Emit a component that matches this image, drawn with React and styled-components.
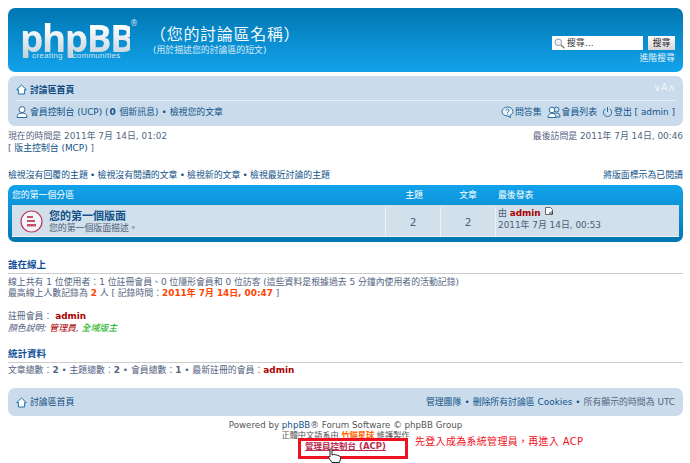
import styled, { createGlobalStyle } from "styled-components";

const cjk = `"DejaVu Sans", "Noto Sans CJK TC", sans-serif`;
const base = "8.9px";

const GlobalStyle = createGlobalStyle`
  html, body {
    margin: 0;
    padding: 0;
    background: #fff;
  }
  body {
    font-family: ${cjk};
    font-size: ${base};
    line-height: 12px;
    color: #536482;
    overflow: hidden;
  }
  a { text-decoration: none; color: #105289; }
`;

const Page = styled.div`
  width: 690px;
  height: 463px;
  box-sizing: border-box;
  padding: 8px 7px 0 8px;
  overflow: hidden;
`;

const Header = styled.header`
  height: 64px;
  border-radius: 7px;
  background: linear-gradient(180deg, #0076b1 0%, #12a3eb 100%);
  display: flex;
  justify-content: space-between;
  color: #fff;
`;

const Brand = styled.div`
  display: flex;
  padding: 10px 0 0 12px;
`;

const Logo = styled.div`
  position: relative;
  width: 120px;
  height: 50px;
`;

const LogoWord = styled.span`
  display: block;
  width: 110px;
  font-family: "Open Sans", "DejaVu Sans", sans-serif;
  font-size: 37px;
  line-height: 40px;
  letter-spacing: -1.5px;
  font-weight: 700;
  background: linear-gradient(180deg, #ffffff 20%, #c4d2dc 95%);
  -webkit-background-clip: text;
  background-clip: text;
  color: transparent;
`;

const LogoReg = styled.span`
  position: absolute;
  left: 110px;
  top: 2px;
  font-size: 8px;
  line-height: 8px;
  color: #d6e6f0;
`;

const LogoTag = styled.span`
  position: absolute;
  left: 12px;
  top: 33px;
  font-family: "Liberation Sans", sans-serif;
  font-size: 8px;
  line-height: 10px;
  letter-spacing: 0.3px;
  word-spacing: 7px;
  color: #d4e4ef;
  white-space: nowrap;
`;

const SiteText = styled.div`
  margin-left: 13px;
  padding-top: 4px;
`;

const SiteTitle = styled.h1`
  margin: 0 0 0 -3px;
  font-family: "Noto Sans CJK TC", sans-serif;
  font-size: 16px;
  line-height: 22px;
  font-weight: 400;
  letter-spacing: 0.7px;
  color: #f2f8fc;
`;

const SiteDesc = styled.p`
  margin: 0;
  font-size: ${base};
  line-height: 12px;
  color: #dcecf6;
`;

const SearchArea = styled.div`
  display: flex;
  flex-direction: column;
  align-items: flex-end;
  padding: 28px 8px 0 0;
`;

const SearchRow = styled.div`
  display: flex;
  gap: 5px;
`;

const SearchInput = styled.div`
  width: 91px;
  height: 14px;
  background: #fff;
  display: flex;
  align-items: center;
  gap: 2px;
  padding-left: 2px;
  box-sizing: border-box;
  color: #333;
  font-size: ${base};
`;

const SearchButton = styled.div`
  width: 27px;
  height: 14px;
  background: linear-gradient(180deg, #fbfbfb, #d6d6d6);
  color: #222;
  font-size: ${base};
  line-height: 14px;
  text-align: center;
`;

const AdvLink = styled.a`
  color: #e6f3fb;
  font-size: ${base};
  margin-top: 2px;
`;

const NavBar = styled.nav`
  margin-top: 4px;
  height: 50px;
  box-sizing: border-box;
  padding: 0 8px;
  border-radius: 7px;
  background: #cadceb;
`;

const NavRow = styled.div`
  display: flex;
  align-items: center;
  justify-content: space-between;
  ${(p) =>
    p.$divided
      ? "height: 21px; padding-top: 3px; border-bottom: 1px solid #e8f0f6;"
      : "height: 22px;"}
`;

const NavGroup = styled.div`
  display: flex;
  align-items: center;
  gap: ${(p) => p.$gap || 0}px;
`;

const Crumb = styled.a`
  display: flex;
  align-items: center;
  gap: 3px;
  color: #0d4a80;
  font-size: ${base};
  font-weight: ${(p) => (p.$bold ? 700 : 400)};
`;

const NavLink = styled.a`
  display: flex;
  align-items: center;
  gap: 1px;
  color: #105289;
  font-size: ${base};
  white-space: pre;
`;

const Bullet = styled.span`
  color: #105289;
  margin: 0 3px;
`;

const FontSizer = styled.span`
  color: #eef4f9;
  font-size: 10px;
  margin-top: -4px;
`;

const TimeRows = styled.div`
  margin-top: 4px;
  height: 24px;
  display: flex;
  justify-content: space-between;
  color: #536482;
`;

const TimeLink = styled.a`
  color: #105289;
`;

const QuickLinks = styled.div`
  margin-top: 15px;
  display: flex;
  justify-content: space-between;
  color: #105289;
  white-space: pre;
  word-spacing: -0.6px;
`;

const ForumBlock = styled.section`
  margin-top: 4px;
  height: 57px;
  box-sizing: border-box;
  padding: 0 4px 5px 4px;
  border-radius: 7px;
  background: linear-gradient(180deg, #12a3eb 0%, #0c8ed2 50%, #0076b1 100%);
`;

const ForumHead = styled.div`
  height: 20px;
  display: flex;
  align-items: center;
  color: #fff;
  font-size: ${base};
`;

const ForumBody = styled.div`
  height: 32px;
  background: #d2e0eb;
  display: flex;
  color: #4c5d77;
  padding-top: 2px;
  box-sizing: border-box;
  border-bottom: 1px solid #eef3f7;
`;

const NameCol = styled.div`
  flex: 1;
  display: flex;
  align-items: center;
  gap: 6px;
  min-width: 0;
  padding-left: ${(p) => (p.$head ? 0 : 8)}px;
`;

const CountCol = styled.div`
  width: 54px;
  text-align: center;
  font-size: ${(p) => (p.$head ? base : "10.5px")};
  display: flex;
  align-items: center;
  justify-content: center;
  ${(p) => !p.$head && "border-left: 1px solid #eef3f7;"}
`;

const LastCol = styled.div`
  width: 184px;
  box-sizing: border-box;
  padding-left: 3px;
  ${(p) =>
    p.$head
      ? "display: flex; align-items: center;"
      : "padding-left: 2px; border-left: 1px solid #eef3f7;"}
`;

const ForumTitle = styled.a`
  display: block;
  color: #105289;
  font-size: 11px;
  line-height: 13px;
  font-weight: 700;
`;

const ForumDesc = styled.div`
  font-size: ${base};
  line-height: 11px;
`;

const Strong = styled.strong`
  color: ${(p) => p.$color || "#aa0000"};
  font-weight: ${(p) => p.$weight || 700};
`;

const Section = styled.section`
  margin-top: ${(p) => p.$top}px;
`;

const SectionTitle = styled.h3`
  margin: 0;
  font-size: 9.5px;
  line-height: 13px;
  font-weight: 700;
  color: #115098;
  border-bottom: 1px solid #cccccc;
  padding-bottom: 2px;
`;

const TextLine = styled.p`
  margin: 0;
  white-space: pre;
  color: #536482;
  line-height: ${(p) => p.$lh || 12}px;
  padding-top: ${(p) => p.$pt || 0}px;
`;

const Legend = styled.p`
  margin: 0;
  font-style: italic;
  font-size: ${base};
  line-height: 12px;
  color: #536482;
`;

const FootBar = styled(NavBar)`
  margin-top: 12px;
  height: 28px;
  display: flex;
  align-items: center;
  justify-content: space-between;
`;

const Credit = styled.div`
  margin-top: 4px;
  text-align: center;
  color: #555;
  font-size: 8.7px;
  line-height: 10px;
`;

const CreditSmall = styled.div`
  font-size: 8.2px;
`;

const Hot = styled.span`
  color: #ff6600;
  font-weight: 700;
`;

const AcpLine = styled.div`
  position: relative;
  height: 12px;
  display: flex;
  justify-content: center;
`;

const AcpLink = styled.a`
  color: #bc2a4d;
  font-weight: 700;
  font-size: 8.5px;
  line-height: 12px;
  text-decoration: underline;
`;

const RedBox = styled.div`
  position: absolute;
  left: 290px;
  top: -2px;
  width: 110px;
  height: 21px;
  box-sizing: border-box;
  border: 3px solid #ee1122;
`;

const Note = styled.span`
  position: absolute;
  left: 407px;
  top: -5px;
  color: #f01020;
  font-size: 10px;
  line-height: 14px;
  letter-spacing: 0.3px;
  white-space: nowrap;
`;

const Cursor = styled.svg`
  position: absolute;
  left: 319px;
  top: 8px;
`;

const PostGlyph = styled.svg`
  margin-left: 2px;
`;

const HomeIcon = () => (
  <svg width="11" height="11" viewBox="0 0 11 11" fill="none">
    <path d="M.7 5.600 5.500 1l4.800 4.600H8.600v4.400H2.400V5.600z" fill="#fff" stroke="#1a6fa8" />
  </svg>
);

const UserIcon = () => (
  <svg width="13" height="12" viewBox="0 0 13 12" fill="none">
    <circle cx="6" cy="3.600" r="3" fill="#fff" stroke="#2d6d9e" />
    <path d="M1 11.500c0-3 2-4.500 5-4.500s5 1.500 5 4.500z" fill="#fff" stroke="#2d6d9e" />
  </svg>
);

const FaqIcon = () => (
  <svg width="13" height="12" viewBox="0 0 13 12" fill="none">
    <path d="M6.500 1C3.400 1 1 2.900 1 5.500S3.400 10 6.500 10l3 1.500-.6-2C10.800 8.700 12 7.200 12 5.500 12 2.900 9.600 1 6.500 1z" fill="#e8f1f7" stroke="#2d6d9e" />
    <path d="M5 4.500c0-2 3-2 3 0 0 1.200-1.500 1.100-1.500 2.300M6.500 7.800v.8" stroke="#2d6d9e" />
  </svg>
);

const MembersIcon = () => (
  <svg width="14" height="12" viewBox="0 0 14 12" fill="none">
    <circle cx="9.500" cy="3.500" r="2.500" fill="#cfe0ec" stroke="#2d6d9e" />
    <path d="M6 11c0-2.500 1.200-4 3.500-4S13 8.500 13 11z" fill="#cfe0ec" stroke="#2d6d9e" />
    <circle cx="5" cy="4" r="2.800" fill="#fff" stroke="#2d6d9e" />
    <path d="M1 11.500c0-2.700 1.500-4.200 4-4.200s4 1.500 4 4.200z" fill="#fff" stroke="#2d6d9e" />
  </svg>
);

const PowerIcon = () => (
  <svg width="11" height="12" viewBox="0 0 11 12" fill="none">
    <path d="M3.300 2.700a4.200 4.200 0 1 0 4.400 0" stroke="#2d6d9e" />
    <path d="M5.500 1v5" stroke="#2d6d9e" />
  </svg>
);

const SearchIcon = () => (
  <svg width="11" height="11" viewBox="0 0 11 11" fill="none">
    <circle cx="4.300" cy="4.300" r="3.300" fill="#eef3f7" stroke="#8a9aa8" />
    <path d="M7 7l3.300 3.300" stroke="#8a7a5a" strokeWidth="1.500" />
  </svg>
);

const ForumIcon = () => (
  <svg width="23" height="23" viewBox="0 0 23 23" fill="none">
    <circle cx="11.500" cy="11.500" r="10.500" fill="#f3f6f9" stroke="#c03a5e" strokeWidth="1.200" />
    <path d="M7 6h6v2H7zM7 10h8v2H7zM7 14h9v2.500H7z" fill="#c8506e" />
  </svg>
);

const PostIcon = () => (
  <PostGlyph width="9" height="9" viewBox="0 0 9 9" fill="none">
    <path d="M.5.500h5l2 2v5h-7z" fill="#fff" stroke="#667" />
    <path d="M4 6h4M6.500 4.500 8 6 6.500 7.500" stroke="#333" />
  </PostGlyph>
);

const HandIcon = () => (
  <Cursor width="16" height="20" viewBox="0 0 16 20" fill="none">
    <path d="M3 1.500c0-1 2-1 2 0V7l1.500-.5 2 .3 2 .5 2 .7c1 .5 1 1.500 1 3l-1 3.500H5L1.500 9.500c-.5-1 .5-1.500 1.500-.5z" fill="#fff" stroke="#222" />
    <path d="M4 16c-1.500 1-1.500 2 0 3.500M12 16c1.500 1 1.500 2 0 3.500" stroke="#333" />
  </Cursor>
);

const App = () => (
  <>
    <GlobalStyle />
    <Page>
      <Header>
        <Brand>
          <Logo>
            <LogoWord>phpBB</LogoWord>
            <LogoReg>®</LogoReg>
            <LogoTag>creating communities</LogoTag>
          </Logo>
          <SiteText>
            <SiteTitle>（您的討論區名稱）</SiteTitle>
            <SiteDesc>(用於描述您的討論區的短文)</SiteDesc>
          </SiteText>
        </Brand>
        <SearchArea>
          <SearchRow>
            <SearchInput>
              <SearchIcon />
              搜尋…
            </SearchInput>
            <SearchButton>搜尋</SearchButton>
          </SearchRow>
          <AdvLink>進階搜尋</AdvLink>
        </SearchArea>
      </Header>

      <NavBar>
        <NavRow $divided>
          <Crumb $bold>
            <HomeIcon />
            討論區首頁
          </Crumb>
          <FontSizer>∨A∧</FontSizer>
        </NavRow>
        <NavRow>
          <NavGroup>
            <NavLink>
              <UserIcon />
              會員控制台 (UCP) (<b>0</b> 個新訊息)
            </NavLink>
            <Bullet>•</Bullet>
            <NavLink>檢視您的文章</NavLink>
          </NavGroup>
          <NavGroup $gap={5}>
            <NavLink>
              <FaqIcon />
              問答集
            </NavLink>
            <NavLink>
              <MembersIcon />
              會員列表
            </NavLink>
            <NavLink>
              <PowerIcon />
              登出 [ admin ]
            </NavLink>
          </NavGroup>
        </NavRow>
      </NavBar>

      <TimeRows>
        <div>
          現在的時間是 2011年 7月 14日, 01:02
          <br />[ <TimeLink>版主控制台 (MCP)</TimeLink> ]
        </div>
        <div>最後訪問是 2011年 7月 14日, 00:46</div>
      </TimeRows>

      <QuickLinks>
        <span>檢視沒有回覆的主題 • 檢視沒有閱讀的文章 • 檢視新的文章 • 檢視最近討論的主題</span>
        <span>將版面標示為已閱讀</span>
      </QuickLinks>

      <ForumBlock>
        <ForumHead>
          <NameCol $head>您的第一個分區</NameCol>
          <CountCol $head>主題</CountCol>
          <CountCol $head>文章</CountCol>
          <LastCol $head>最後發表</LastCol>
        </ForumHead>
        <ForumBody>
          <NameCol>
            <ForumIcon />
            <div>
              <ForumTitle>您的第一個版面</ForumTitle>
              <ForumDesc>您的第一個版面描述。</ForumDesc>
            </div>
          </NameCol>
          <CountCol>2</CountCol>
          <CountCol>2</CountCol>
          <LastCol>
            由 <Strong>admin</Strong> <PostIcon />
            <br />
            2011年 7月 14日, 00:53
          </LastCol>
        </ForumBody>
      </ForumBlock>

      <Section $top={16}>
        <SectionTitle>誰在線上</SectionTitle>
        <TextLine $pt={3} $lh={11}>
          線上共有 1 位使用者：1 位註冊會員、0 位隱形會員和 0 位訪客 (這些資料是根據過去 5 分鐘內使用者的活動記錄)
        </TextLine>
        <TextLine $lh={11}>
          最高線上人數記錄為 <Strong $color="#ff4400">2</Strong> 人 [ 記錄時間：<Strong $color="#ff4400">2011年 7月 14日, 00:47</Strong> ]
        </TextLine>
      </Section>

      <Section $top={11}>
        <TextLine>
          註冊會員： <Strong>admin</Strong>
        </TextLine>
        <Legend>
          顏色說明: <Strong as="span" $weight={400}>管理員</Strong>, <Strong as="span" $color="#00aa00" $weight={400}>全域版主</Strong>
        </Legend>
      </Section>

      <Section $top={13}>
        <SectionTitle>統計資料</SectionTitle>
        <TextLine $pt={1}>
          文章總數：<b>2</b> • 主題總數：<b>2</b> • 會員總數：<b>1</b> • 最新註冊的會員：<Strong>admin</Strong>
        </TextLine>
      </Section>

      <FootBar as="div">
        <Crumb>
          <HomeIcon />
          討論區首頁
        </Crumb>
        <NavGroup>
          <NavLink>管理團隊</NavLink>
          <Bullet>•</Bullet>
          <NavLink>刪除所有討論區 Cookies</NavLink>
          <Bullet>•</Bullet>
          所有顯示的時間為 UTC
        </NavGroup>
      </FootBar>

      <Credit>
        Powered by <a>phpBB</a>® Forum Software © phpBB Group
        <CreditSmall>
          正體中文語系由 <Hot>竹貓星球</Hot> 維護製作
        </CreditSmall>
      </Credit>
      <AcpLine>
        <AcpLink>管理員控制台 (ACP)</AcpLink>
        <RedBox />
        <Note>先登入成為系統管理員，再進入 ACP</Note>
        <HandIcon />
      </AcpLine>
    </Page>
  </>
);

export default App;
